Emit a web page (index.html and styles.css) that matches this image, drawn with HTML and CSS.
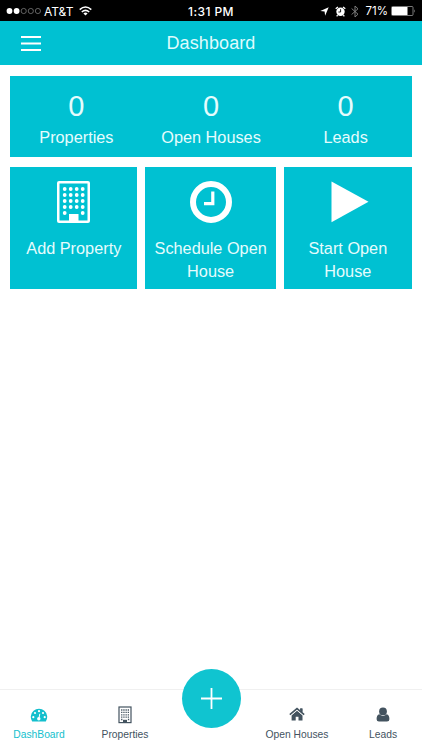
FILE: index.html
```
<!DOCTYPE html>
<html lang="en">
<head>
    <meta charset="UTF-8">
    <meta name="viewport" content="width=device-width, initial-scale=1.0">
    <title>Dashboard</title>
    <link rel="stylesheet" href="styles.css">
</head>
<body>

<div class="status-bar">
    <div class="carrier">
        <svg width="36" height="8" viewBox="0 0 36 8">
            <g fill="#fff"><circle cx="3.5" cy="4" r="2.9"/><circle cx="10.6" cy="4" r="2.9"/></g>
            <g fill="none" stroke="#8a8a8a" stroke-width=".7"><circle cx="17.7" cy="4" r="2.6"/><circle cx="24.8" cy="4" r="2.6"/><circle cx="31.9" cy="4" r="2.6"/></g>
        </svg>
        <span class="carrier-name">AT&amp;T</span>
        <svg class="wifi" width="13" height="10" viewBox="0 0 13 10">
            <g fill="none" stroke="#fff" stroke-width="1.6"><path d="M.7 3.6Q6.5-1.6 12.3 3.6"/><path d="M2.8 6Q6.5 2.6 10.2 6"/></g>
            <path fill="#fff" d="M4.4 7.4Q6.5 5.7 8.6 7.4L6.5 9.6z"/>
        </svg>
    </div>
    <span class="time">1:31 PM</span>
    <div class="indicators">
        <svg width="9" height="9" viewBox="0 0 9 9"><path fill="#fff" d="M8.7.3L5.1 8.7 4.6 4.6.3 4.1z"/></svg>
        <svg class="alarm" width="11" height="11" viewBox="0 0 11 11">
            <circle cx="5.5" cy="5.8" r="4.2" fill="#fff"/>
            <path d="M.7 2.8L3 .9M10.3 2.8L8 .9M2.6 9.2L1.7 10.4M8.4 9.2l.9 1.2" stroke="#fff" stroke-width="1.3"/>
            <path d="M5.6 3.2V6H3.4" fill="none" stroke="#000" stroke-width=".9"/>
        </svg>
        <svg class="bluetooth" width="8" height="13" viewBox="0 0 8 13"><path d="M.6 3.5L7 9.2 4 12V1L7 3.8.6 9.5" fill="none" stroke="#888" stroke-width=".9"/></svg>
        <span class="percent">71%</span>
        <svg width="25" height="10" viewBox="0 0 25 10">
            <rect x=".5" y=".5" width="21.5" height="9" rx="1" fill="none" stroke="#999" stroke-width=".8"/>
            <rect x="1" y="1" width="15.5" height="8" fill="#fff"/>
            <path d="M23 3.2q1.5 1.8 0 3.6z" fill="#999"/>
        </svg>
    </div>
</div>

<header class="header">
    <button class="menu" aria-label="Menu">
        <svg width="20" height="15" viewBox="0 0 20 15"><path d="M0 1h20M0 7.5h20M0 14h20" stroke="#fff" stroke-width="2"/></svg>
    </button>
    <h1 class="title">Dashboard</h1>
</header>

<main class="content">
    <div class="stats">
        <div class="stat"><div class="number">0</div><div>Properties</div></div>
        <div class="stat"><div class="number">0</div><div>Open Houses</div></div>
        <div class="stat"><div class="number">0</div><div>Leads</div></div>
    </div>

    <div class="actions">
        <div class="action">
            <svg width="33" height="42" viewBox="0 0 33 42">
                <rect x="1.25" y="1.25" width="30.5" height="39.5" rx=".8" fill="none" stroke="#fff" stroke-width="2.5"/>
                <path d="M12 33h9.5v8H12z" fill="#fff"/>
                <path d="M7.7 8h18.2M7.7 14h18.2M7.7 20h18.2M7.7 26h18.2M7.7 32h.01M25.7 32h.01" stroke="#fff" stroke-width="3.8" stroke-linecap="round" stroke-dasharray="0 6"/>
            </svg>
            <span>Add Property</span>
        </div>
        <div class="action">
            <svg width="42" height="42" viewBox="0 0 42 42">
                <circle cx="21" cy="21" r="18" fill="none" stroke="#fff" stroke-width="6"/>
                <path d="M22.8 10.5v12.2h-8.8" fill="none" stroke="#fff" stroke-width="3.2"/>
            </svg>
            <span>Schedule Open House</span>
        </div>
        <div class="action">
            <svg class="play" width="38" height="42" viewBox="0 0 38 42"><path d="M.5.5L37.5 20.8.5 41.3z" fill="#fff"/></svg>
            <span>Start Open House</span>
        </div>
    </div>
</main>

<nav class="tabs">
    <a class="tab active">
        <svg width="18" height="18" viewBox="0 0 18 18">
            <path fill="currentColor" d="M2.2 15.6A8.2 8.2 0 1 1 15.8 15.6z"/>
            <g fill="#fff"><circle cx="3.3" cy="11.2" r="1.1"/><circle cx="5" cy="7" r="1.1"/><circle cx="9" cy="5.2" r="1.1"/><circle cx="13" cy="7" r="1.1"/><circle cx="14.7" cy="11.2" r="1.1"/><circle cx="8.8" cy="12.8" r="1.7"/></g>
            <path d="M8.8 13l1-5.2" stroke="#fff"/>
        </svg>
        <span>DashBoard</span>
    </a>
    <a class="tab">
        <svg width="14" height="18" viewBox="0 0 14 18">
            <rect x="1" y="1" width="12" height="15.6" fill="none" stroke="currentColor" stroke-width="1.2"/>
            <path d="M5 13.8h4v3H5z" fill="currentColor"/>
            <path d="M3.1 4h8M3.1 6.4h8M3.1 8.8h8M3.1 11.2h8M3.1 13.5h1.4M9.9 13.5h1.4" stroke="currentColor" stroke-width="1.3" stroke-dasharray="1.3 .9"/>
        </svg>
        <span>Properties</span>
    </a>
    <a class="tab add" aria-label="Add">
        <svg width="21" height="21" viewBox="0 0 21 21"><path d="M10.5 0v21M0 10.5h21" stroke="#fff" stroke-width="1.8"/></svg>
    </a>
    <a class="tab">
        <svg width="16" height="18" viewBox="0 0 16 18">
            <path fill="currentColor" d="M8 4.6l5.5 4.6v5.3H9.5v-3.8H6.7v3.8H2.6V9.2zM11.2 2.6h2.2v4.6l-2.2-1.8z"/>
            <path d="M.8 9L8 2.9 15.2 9" fill="none" stroke="#fff" stroke-width="2.6"/>
            <path d="M.8 8.7L8 2.6l7.2 6.1" fill="none" stroke="currentColor" stroke-width="1.6"/>
            <path fill="currentColor" d="M11.2 2.4h2.2v4l-2.2-1z"/>
        </svg>
        <span>Open Houses</span>
    </a>
    <a class="tab">
        <svg width="14" height="18" viewBox="0 0 14 18">
            <circle cx="7" cy="5.4" r="3.9" fill="currentColor"/>
            <path fill="currentColor" d="M3.4 8.2C1.2 8.6.6 10.6.6 13.2q0 2.4 2.4 2.4h8q2.4 0 2.4-2.4c0-2.6-.6-4.6-2.8-5q-3.6 3.4-7.2 0z"/>
        </svg>
        <span>Leads</span>
    </a>
</nav>

</body>
</html>
```
FILE: styles.css
```
* {
    box-sizing: border-box;
}
body {
    margin: 0;
    height: 100vh;
    overflow: hidden;
    display: flex;
    flex-direction: column;
    background-color: #fff;
    font-family: "Liberation Sans", Arial, sans-serif;
}
svg {
    display: block;
    flex: none;
}
.status-bar {
    height: 21px;
    padding: 0 6px;
    display: grid;
    grid-template-columns: 1fr auto 1fr;
    align-items: center;
    background-color: #000;
    color: #fff;
    font-family: Inter, sans-serif;
    font-size: 12px;
    line-height: 21px;
}
.carrier, .indicators {
    display: flex;
    align-items: center;
}
.carrier-name, .percent {
    padding-top: 1px;
}
.indicators {
    justify-content: flex-end;
}
.carrier-name {
    margin-left: 2px;
    font-size: 12px;
}
.wifi {
    margin-left: 6px;
}
.time {
    font-weight: 500;
    letter-spacing: 0.4px;
}
.alarm {
    margin-left: 6px;
}
.bluetooth {
    margin: 0 7px 0 5px;
}
.percent {
    margin-right: 3px;
    font-size: 11.5px;
}
.header {
    height: 44px;
    display: grid;
    grid-template-columns: 62px 1fr 62px;
    align-items: center;
    background-color: #00c1d2;
}
.menu {
    padding: 0 0 0 21px;
    border: none;
    background: none;
}
.title {
    margin: 0;
    color: #dffbfd;
    font-size: 18px;
    font-weight: normal;
    letter-spacing: 0.1px;
    text-align: center;
}
.content {
    flex: 1;
    padding: 11px 10.4px 0;
    color: #e6fcfd;
    font-size: 16.3px;
    line-height: 22.5px;
    text-align: center;
}
.stats {
    height: 81px;
    padding: 12px 0 0;
    display: grid;
    grid-template-columns: 132px 1fr 132px;
    background-color: #00c1d2;
}
.number {
    height: 38px;
    font-size: 29px;
    line-height: 36px;
}
.actions {
    margin-top: 10px;
    display: grid;
    grid-template-columns: 126.8px 131px 127.5px;
    justify-content: space-between;
}
.action {
    height: 122px;
    padding-top: 14px;
    display: flex;
    flex-direction: column;
    align-items: center;
    gap: 14px;
    background-color: #00c1d2;
}
.action span {
    max-width: 118px;
}
.play {
    margin-left: 5px;
}
.tabs {
    position: relative;
    height: 61px;
    display: grid;
    grid-template-columns: repeat(5, 86px);
    justify-content: center;
    border-top: 1px solid #f0f0f0;
}
.tab {
    padding-top: 16px;
    display: flex;
    flex-direction: column;
    align-items: center;
    gap: 4px;
    color: #43535f;
    font-size: 10.3px;
    line-height: 14px;
}
.active {
    color: #13bfcd;
}
.add {
    position: absolute;
    left: 50%;
    top: -21px;
    width: 59px;
    height: 59px;
    margin-left: -29.5px;
    padding: 0;
    justify-content: center;
    border-radius: 50%;
    background-color: #10c4d0;
}
/* the floating button leaves the third column empty */
.add + .tab {
    grid-column: 4;
}
```
